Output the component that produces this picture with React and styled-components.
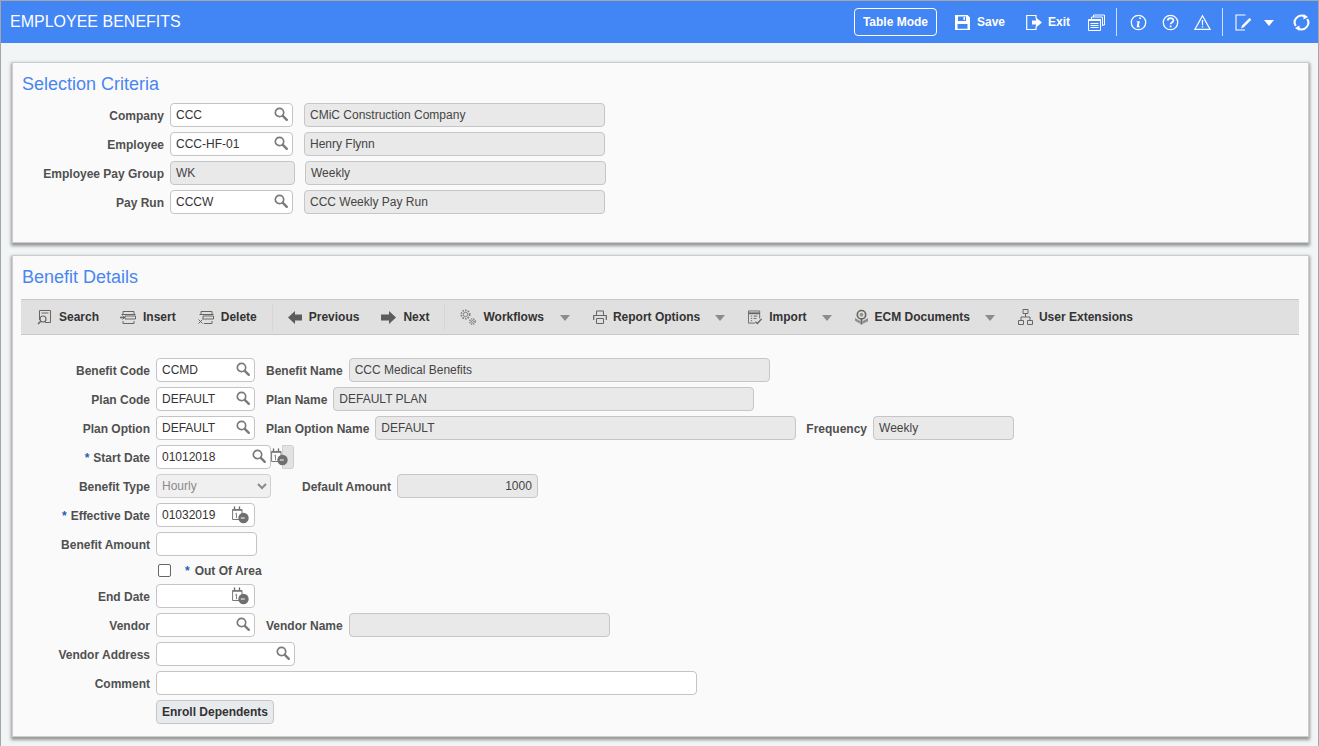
import React from "react";
import styled, { createGlobalStyle } from "styled-components";

const GlobalStyle = createGlobalStyle`
  html, body {
    margin: 0;
    padding: 0;
    height: 746px;
    overflow: hidden;
    background: #f2f5f5;
    font-family: "Liberation Sans", Arial, sans-serif;
    font-size: 12px;
  }
  * { box-sizing: border-box; }
`;

const Page = styled.div`
  height: 746px;
  border-left: 1px solid #a6a6a6;
  border-right: 1px solid #a6a6a6;
  border-top: 1px solid #a6a6a6;
  overflow: hidden;
`;

const TopBar = styled.header`
  height: 42px;
  background: #4285f4;
  color: #fff;
  display: flex;
  align-items: center;
  padding: 0 8px 0 9px;
`;

const PageTitle = styled.h1`
  margin: 0 auto 0 0;
  font-size: 16px;
  font-weight: 400;
  color: #fff;
`;

const TableModeButton = styled.button`
  width: 83px;
  height: 28px;
  margin-right: 17px;
  border: 1px solid #fff;
  border-radius: 4px;
  background: transparent;
  color: #fff;
  font: bold 12px "Liberation Sans", Arial, sans-serif;
  padding: 0;
`;

const TopAction = styled.span`
  display: flex;
  align-items: center;
  gap: 6px;
  margin-right: ${(p) => p.$mr || 0}px;
  font-weight: bold;
  font-size: 12px;
  color: #fff;
`;

const TopDivider = styled.span`
  width: 1px;
  height: 28px;
  background: rgba(255, 255, 255, 0.75);
  margin: 0 ${(p) => p.$right}px 0 ${(p) => p.$left}px;
`;

const Panel = styled.section`
  height: ${(p) => p.$height}px;
  margin: ${(p) => p.$top}px 9px 0 11px;
  padding: 0 9px;
  background: #fafafa;
  border: 1px solid #cdcdcd;
  box-shadow: 0 2px 3px 1px rgba(0, 0, 0, 0.38);
`;

const PanelTitle = styled.h2`
  margin: 0;
  height: ${(p) => p.$height}px;
  padding-top: 11px;
  font-size: 18px;
  font-weight: 400;
  line-height: 21px;
  color: #4a86f0;
`;

const Row = styled.div`
  display: flex;
  align-items: center;
  height: ${(p) => p.$height || 24}px;
  margin-bottom: ${(p) => (p.$gap === undefined ? 5 : p.$gap)}px;
`;

const RowLabel = styled.label`
  flex: none;
  width: ${(p) => p.$width}px;
  margin-right: 6px;
  padding-top: 2px;
  text-align: right;
  font-weight: bold;
  font-size: 12px;
  color: #505050;
  white-space: nowrap;
`;

const InlineLabel = styled.label`
  flex: none;
  margin: 0 6px 0 ${(p) => p.$left || 11}px;
  padding-top: 2px;
  font-weight: bold;
  font-size: 12px;
  color: #505050;
  white-space: nowrap;
`;

const Required = styled.span`
  color: #1f5fb8;
  margin-right: ${(p) => p.$mr || 4}px;
`;

const FieldWrap = styled.span`
  position: relative;
  display: block;
  flex: none;
  width: ${(p) => p.$width}px;
  height: 24px;
`;

const TextInput = styled.input`
  display: block;
  width: 100%;
  height: 24px;
  padding: 0 5px;
  border: 1px solid #c4c4c4;
  border-radius: 4px;
  background: #fff;
  color: #333;
  font: 12px "Liberation Sans", Arial, sans-serif;
  outline: none;
`;

const ReadOnlyField = styled.span`
  display: flex;
  align-items: center;
  justify-content: ${(p) => (p.$right ? "flex-end" : "flex-start")};
  flex: none;
  width: ${(p) => p.$width}px;
  height: 24px;
  margin-left: ${(p) => p.$left || 0}px;
  padding: 0 5px;
  border: 1px solid #c6c6c6;
  border-radius: 4px;
  background: #e9e9e9;
  color: #444;
  font-size: 12px;
`;

const FieldIcon = styled.span`
  position: absolute;
  top: 3px;
  right: ${(p) => p.$right}px;
  display: flex;
  pointer-events: none;
`;

const DisabledSelect = styled.select`
  flex: none;
  width: 115px;
  height: 24px;
  padding: 0 0 0 1px;
  border: 1px solid #cfcfcf;
  border-radius: 4px;
  background: #f0f0f0;
  color: #8a8a8a;
  opacity: 1;
  font: 12px "Liberation Sans", Arial, sans-serif;
`;

const CalendarTail = styled.span`
  position: relative;
  flex: none;
  display: flex;
  width: 23px;
  height: 24px;
  padding-top: 3px;
`;

const TailTab = styled.span`
  position: absolute;
  left: 11px;
  top: 0;
  width: 12px;
  height: 24px;
  background: #e2e2e2;
  border: 1px solid #d0d0d0;
  border-radius: 0 3px 3px 0;
`;

const TailIcon = styled.span`
  position: relative;
  z-index: 1;
  display: flex;
`;

const CheckRow = styled.label`
  display: flex;
  align-items: center;
  height: 28px;
  margin-left: 134px;
  padding-left: 2px;
  padding-top: 1px;
  font-weight: bold;
  font-size: 12px;
  color: #505050;
`;

const CheckBox = styled.input`
  width: 13px;
  height: 13px;
  margin: 0 14px 0 0;
  appearance: none;
  background: #fff;
  border: 1px solid #666;
  border-radius: 2px;
`;

const EnrollButton = styled.button`
  width: 118px;
  height: 24px;
  margin-left: 134px;
  padding: 0;
  border: 1px solid #c6c6c6;
  border-radius: 4px;
  background: #e8ebee;
  color: #333;
  font: bold 12px "Liberation Sans", Arial, sans-serif;
`;

const Toolbar = styled.nav`
  display: flex;
  align-items: center;
  height: 36px;
  margin: 0 0 23px -1px;
  padding-left: 16px;
  background: #e0e0e0;
  border-top: 1px solid #c8c8c8;
  border-bottom: 1px solid #c8c8c8;
`;

const ToolItem = styled.span`
  display: flex;
  align-items: center;
  gap: ${(p) => p.$gap || 7}px;
  margin-right: ${(p) => (p.$mr === undefined ? 22 : p.$mr)}px;
  font-weight: bold;
  font-size: 12px;
  color: #333;
  white-space: nowrap;
`;

const ToolDivider = styled.span`
  width: 1px;
  height: 28px;
  background: #d6d6d6;
  margin: 0 15px 0 -7px;
`;

const ToolCaret = styled.span`
  width: 0;
  height: 0;
  margin: 2px 23px 0 ${(p) => p.$left || -7}px;
  border-left: 5px solid transparent;
  border-right: 5px solid transparent;
  border-top: 6px solid #8c8c8c;
`;

const WhiteCaret = styled.span`
  width: 0;
  height: 0;
  margin: 2px 19px 0 12px;
  border-left: 5px solid transparent;
  border-right: 5px solid transparent;
  border-top: 6px solid #fff;
`;

const SearchIcon = () => (
  <svg width="16" height="16" viewBox="0 0 16 16" fill="none">
    <circle cx="6.5" cy="6.5" r="4.2" stroke="#7b7b7b" strokeWidth="1.7" />
    <path d="M9.8 9.8l4 4" stroke="#7b7b7b" strokeWidth="2.4" strokeLinecap="round" />
  </svg>
);

const CalendarIcon = () => (
  <svg width="17" height="18" viewBox="0 0 17 18" fill="none">
    <path d="M.6 3.5h9.4v10H.6z" stroke="#777" fill="#fff" />
    <path d="M2.5.5v3.5M7.5.5v3.5" stroke="#666" strokeWidth="1.3" />
    <path d="M.6 3h9.4v1.8H.6z" fill="#777" />
    <path d="M3.2 8l1.3-.8v5" stroke="#777" strokeWidth="0.9" />
    <circle cx="11.5" cy="12" r="5.2" fill="#6f6f6f" />
    <path d="M8.8 12h4" stroke="#fff" strokeWidth="1" />
  </svg>
);

const SaveIcon = () => (
  <svg width="17" height="17" viewBox="0 0 17 17">
    <path
      fill="#fff"
      fillRule="evenodd"
      d="M1 1h12.5L16 3.5V16H1zM4 2.5v4.5h8V2.5zM9.5 3h1.5v3H9.5zM3.5 10v4.7h10V10z"
    />
  </svg>
);

const ExitIcon = () => (
  <svg width="16" height="17" viewBox="0 0 16 17" fill="none">
    <path d="M10 4.5V1.5H.7v14H10v-3" stroke="#fff" strokeWidth="1.2" />
    <path d="M6 6.5h4V3.5l6 5-6 5v-3H6z" fill="#fff" />
  </svg>
);

const PagesIcon = () => (
  <svg width="17" height="17" viewBox="0 0 17 17" fill="none" stroke="#fff">
    <path d="M5.5 3V1h11v10h-2" />
    <path d="M3.5 5V3h11v9" />
    <path d="M.5 5.5h12v11H.5z" fill="#4285f4" />
    <path d="M.5 6h12" strokeWidth="2" />
    <path d="M2.5 9.5h8M2.5 11.5h8M2.5 13.5h8" />
  </svg>
);

const InfoIcon = () => (
  <svg width="17" height="17" viewBox="0 0 17 17" fill="none">
    <circle cx="8.5" cy="8.5" r="7.2" stroke="#fff" strokeWidth="1.3" />
    <path d="M9.2 3.4h1.8v1.7H9.2zM6.8 7.2h3l-1 5h1v1H6.6l1-5h-1z" fill="#fff" />
  </svg>
);

const HelpIcon = () => (
  <svg width="17" height="17" viewBox="0 0 17 17" fill="none">
    <circle cx="8.5" cy="8.5" r="7.2" stroke="#fff" strokeWidth="1.3" />
    <path d="M5.8 6.5c0-3.2 5.6-3.2 5.6 0 0 2-2.8 2-2.8 3.8" stroke="#fff" strokeWidth="1.7" />
    <path d="M7.7 11.5h1.8v1.8H7.7z" fill="#fff" />
  </svg>
);

const WarnIcon = () => (
  <svg width="17" height="17" viewBox="0 0 17 17" fill="none">
    <path d="M8.5 1.8L16 15.3H1z" stroke="#fff" strokeWidth="1.2" />
    <path d="M7.8 6h1.4l-.2 5.2h-1zM7.8 12.2h1.4v1.4H7.8z" fill="#fff" />
  </svg>
);

const EditIcon = () => (
  <svg width="17" height="17" viewBox="0 0 17 17" fill="none">
    <path d="M10.5 1H1v15h9" stroke="#fff" strokeWidth="1.1" />
    <path d="M6 14.5l1-3 7.5-7.5 1.8 1.8-7.5 7.5z" fill="#fff" />
  </svg>
);

const RefreshIcon = () => (
  <svg width="17" height="17" viewBox="0 0 17 17" fill="none">
    <path d="M2.8 12A6.7 6.7 0 0 1 11.5 2.4" stroke="#fff" strokeWidth="2.1" />
    <path d="M14.2 5A6.7 6.7 0 0 1 5.5 14.6" stroke="#fff" strokeWidth="2.1" />
    <path d="M10.5 0l4.5 3-4.5 2.6zM6.5 17L2 14l4.5-2.6z" fill="#fff" />
  </svg>
);

const FindIcon = () => (
  <svg width="15" height="15" viewBox="0 0 15 15" fill="none" stroke="#666">
    <path d="M2.5 10V.5h11v12H8" />
    <path d="M4.5 3h7" />
    <circle cx="6" cy="9" r="3" strokeWidth="1.2" />
    <path d="M3.8 11.2L1 14" strokeWidth="1.6" />
  </svg>
);

const InsertIcon = () => (
  <svg width="16" height="15" viewBox="0 0 16 15" fill="none" stroke="#666">
    <path d="M3 4V1.5h11V4M3 11v2.5h11V11" />
    <path d="M1.5 4.5h14" />
    <path d="M5 6h10.5v3H5z" />
    <path d="M0 7.5h4" strokeWidth="1.6" />
    <path d="M2.5 5.5l2 2-2 2" />
  </svg>
);

const DeleteIcon = () => (
  <svg width="16" height="15" viewBox="0 0 16 15" fill="none" stroke="#666">
    <path d="M3 4V1.5h11V4M6 13.5h8V11" />
    <path d="M1.5 4.5h14" />
    <path d="M5 6h10.5v3H5z" />
    <path d="M.5 9.5l4 4M4.5 9.5l-4 4" />
  </svg>
);

const LeftArrow = () => (
  <svg width="14" height="13" viewBox="0 0 14 13">
    <path d="M0 6.5L7 0v3.5h7v6H7V13z" fill="#5c5c5c" />
  </svg>
);

const RightArrow = () => (
  <svg width="15" height="13" viewBox="0 0 15 13">
    <path d="M15 6.5L8 0v3.5H0v6h8V13z" fill="#5c5c5c" />
  </svg>
);

const GearsIcon = () => (
  <svg width="16" height="16" viewBox="0 0 16 16" fill="none" stroke="#808080">
    <circle cx="5.5" cy="5.5" r="2.2" />
    <circle cx="5.5" cy="5.5" r="4.2" strokeWidth="1.7" strokeDasharray="1.6 1.1" />
    <circle cx="12.5" cy="12.5" r="1" />
    <circle cx="12.5" cy="12.5" r="2.7" strokeWidth="1.5" strokeDasharray="1.3 .9" />
  </svg>
);

const PrintIcon = () => (
  <svg width="14" height="14" viewBox="0 0 14 14" fill="none" stroke="#666">
    <path d="M3.5 5V1h7v4" />
    <path d="M.7 10V5.5h12.6V10" strokeWidth="1.2" />
    <path d="M3.5 8.5h7v5h-7z" />
  </svg>
);

const ImportIcon = () => (
  <svg width="14" height="15" viewBox="0 0 15 15" fill="none" stroke="#666">
    <path d="M.5.5h12v8M.5.5v13h7" />
    <path d="M.5 3h12" strokeWidth="2" />
    <path d="M3 6h1.5M6 6h4M3 8.5h1.5M6 8.5h3M3 11h1.5" />
    <path d="M8 12l2 2 4.5-5" strokeWidth="1.5" />
  </svg>
);

const EcmIcon = () => (
  <svg width="13" height="17" viewBox="0 0 14 17" fill="none">
    <circle cx="7" cy="5.5" r="4.5" stroke="#666" strokeWidth="1.8" />
    <circle cx="7" cy="5.5" r="2" fill="#8a9a7a" />
    <path d="M7 10v6" stroke="#666" strokeWidth="1.8" />
    <path d="M0 9l6 3.5v3L0 12zM14 9l-6 3.5v3l6-3z" fill="#8f8f8f" />
  </svg>
);

const TreeIcon = () => (
  <svg width="15" height="16" viewBox="0 0 15 16" fill="none" stroke="#666">
    <path d="M5 .5h5v4H5zM.5 11.5h5v4h-5zM9.5 11.5h5v4h-5z" />
    <path d="M7.5 4.5v3.5M3 11.5V8h9v3.5" />
  </svg>
);

const SearchField = ({ width, value = "" }) => (
  <FieldWrap $width={width}>
    <TextInput readOnly value={value} />
    <FieldIcon $right={4}>
      <SearchIcon />
    </FieldIcon>
  </FieldWrap>
);

const DateField = ({ value = "" }) => (
  <FieldWrap $width={99}>
    <TextInput readOnly value={value} />
    <FieldIcon $right={6}>
      <CalendarIcon />
    </FieldIcon>
  </FieldWrap>
);

const PlainField = ({ width, value = "" }) => (
  <FieldWrap $width={width}>
    <TextInput readOnly value={value} />
  </FieldWrap>
);

function App() {
  return (
    <Page>
      <GlobalStyle />
      <TopBar>
        <PageTitle>EMPLOYEE BENEFITS</PageTitle>
        <TableModeButton>Table Mode</TableModeButton>
        <TopAction $mr={21}>
          <SaveIcon />
          Save
        </TopAction>
        <TopAction $mr={18}>
          <ExitIcon />
          Exit
        </TopAction>
        <PagesIcon />
        <TopDivider $left={11} $right={13} />
        <TopAction $mr={15}>
          <InfoIcon />
        </TopAction>
        <TopAction $mr={15}>
          <HelpIcon />
        </TopAction>
        <WarnIcon />
        <TopDivider $left={11} $right={12} />
        <EditIcon />
        <WhiteCaret />
        <RefreshIcon />
      </TopBar>

      <Panel $top={19} $height={181}>
        <PanelTitle $height={40}>Selection Criteria</PanelTitle>
        <Row>
          <RowLabel $width={142}>Company</RowLabel>
          <SearchField width={123} value="CCC" />
          <ReadOnlyField $width={301} $left={11}>CMiC Construction Company</ReadOnlyField>
        </Row>
        <Row>
          <RowLabel $width={142}>Employee</RowLabel>
          <SearchField width={123} value="CCC-HF-01" />
          <ReadOnlyField $width={301} $left={11}>Henry Flynn</ReadOnlyField>
        </Row>
        <Row>
          <RowLabel $width={142}>Employee Pay Group</RowLabel>
          <ReadOnlyField $width={125}>WK</ReadOnlyField>
          <ReadOnlyField $width={301} $left={10}>Weekly</ReadOnlyField>
        </Row>
        <Row>
          <RowLabel $width={142}>Pay Run</RowLabel>
          <SearchField width={123} value="CCCW" />
          <ReadOnlyField $width={301} $left={11}>CCC Weekly Pay Run</ReadOnlyField>
        </Row>
      </Panel>

      <Panel $top={12} $height={482}>
        <PanelTitle $height={43}>Benefit Details</PanelTitle>
        <Toolbar>
          <ToolItem $mr={21}><FindIcon />Search</ToolItem>
          <ToolItem><InsertIcon />Insert</ToolItem>
          <ToolItem><DeleteIcon />Delete</ToolItem>
          <ToolDivider />
          <ToolItem><LeftArrow />Previous</ToolItem>
          <ToolItem><RightArrow />Next</ToolItem>
          <ToolDivider />
          <ToolItem><GearsIcon />Workflows</ToolItem>
          <ToolCaret $left={-6} />
          <ToolItem $gap={6}><PrintIcon />Report Options</ToolItem>
          <ToolCaret />
          <ToolItem><ImportIcon />Import</ToolItem>
          <ToolCaret />
          <ToolItem><EcmIcon />ECM Documents</ToolItem>
          <ToolCaret />
          <ToolItem $gap={6}><TreeIcon />User Extensions</ToolItem>
        </Toolbar>

        <Row>
          <RowLabel $width={128}>Benefit Code</RowLabel>
          <SearchField width={99} value="CCMD" />
          <InlineLabel>Benefit Name</InlineLabel>
          <ReadOnlyField $width={421}>CCC Medical Benefits</ReadOnlyField>
        </Row>
        <Row>
          <RowLabel $width={128}>Plan Code</RowLabel>
          <SearchField width={99} value="DEFAULT" />
          <InlineLabel>Plan Name</InlineLabel>
          <ReadOnlyField $width={421}>DEFAULT PLAN</ReadOnlyField>
        </Row>
        <Row>
          <RowLabel $width={128}>Plan Option</RowLabel>
          <SearchField width={99} value="DEFAULT" />
          <InlineLabel>Plan Option Name</InlineLabel>
          <ReadOnlyField $width={421}>DEFAULT</ReadOnlyField>
          <InlineLabel $left={10}>Frequency</InlineLabel>
          <ReadOnlyField $width={141}>Weekly</ReadOnlyField>
        </Row>
        <Row>
          <RowLabel $width={128}><Required>*</Required>Start Date</RowLabel>
          <SearchField width={115} value="01012018" />
          <CalendarTail>
            <TailTab />
            <TailIcon><CalendarIcon /></TailIcon>
          </CalendarTail>
        </Row>
        <Row>
          <RowLabel $width={128}>Benefit Type</RowLabel>
          <DisabledSelect disabled value="Hourly" onChange={() => {}}>
            <option>Hourly</option>
          </DisabledSelect>
          <InlineLabel $left={31}>Default Amount</InlineLabel>
          <ReadOnlyField $width={141} $right>1000</ReadOnlyField>
        </Row>
        <Row>
          <RowLabel $width={128}><Required>*</Required>Effective Date</RowLabel>
          <DateField value="01032019" />
        </Row>
        <Row $gap={0}>
          <RowLabel $width={128}>Benefit Amount</RowLabel>
          <PlainField width={101} />
        </Row>
        <CheckRow>
          <CheckBox type="checkbox" />
          <Required $mr={5}>*</Required>Out Of Area
        </CheckRow>
        <Row>
          <RowLabel $width={128}>End Date</RowLabel>
          <DateField />
        </Row>
        <Row>
          <RowLabel $width={128}>Vendor</RowLabel>
          <SearchField width={99} />
          <InlineLabel>Vendor Name</InlineLabel>
          <ReadOnlyField $width={261} />
        </Row>
        <Row>
          <RowLabel $width={128}>Vendor Address</RowLabel>
          <SearchField width={139} />
        </Row>
        <Row>
          <RowLabel $width={128}>Comment</RowLabel>
          <PlainField width={541} />
        </Row>
        <EnrollButton>Enroll Dependents</EnrollButton>
      </Panel>
    </Page>
  );
}

export default App;
